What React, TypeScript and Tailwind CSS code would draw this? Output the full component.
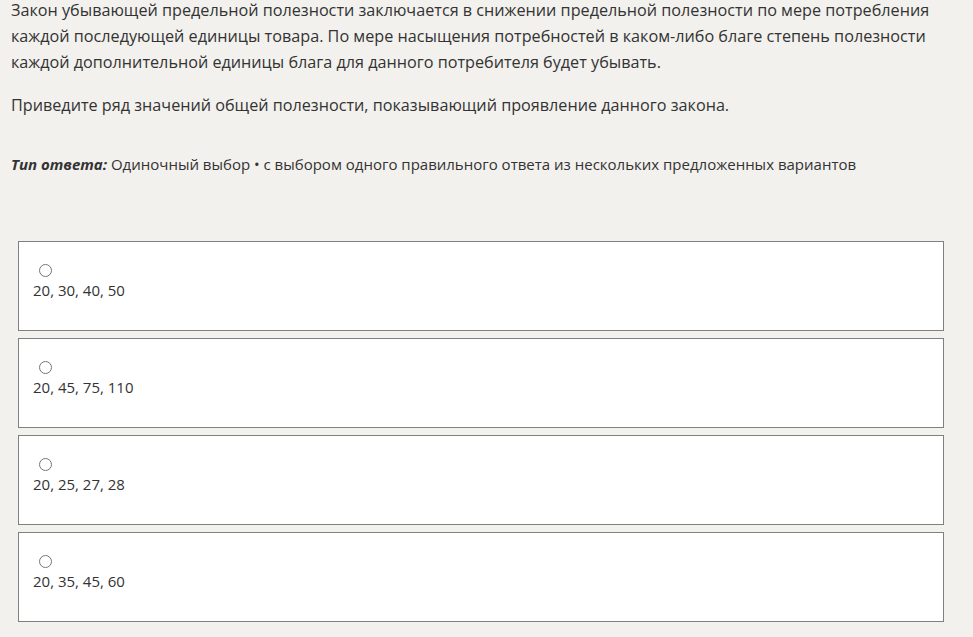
const options = ["20, 30, 40, 50", "20, 45, 75, 110", "20, 25, 27, 28", "20, 35, 45, 60"];

export default function App() {
  return (
    <div className="min-h-[637px] bg-[#f2f1ed] text-[#333333] font-['Open_Sans',sans-serif] pt-px">
      <div className="pl-[11px] pr-[29px]">
        <p className="-mt-[4px] text-[16.2px] leading-[26px]">
          Закон убывающей предельной полезности заключается в снижении предельной полезности по мере потребления
          <br />
          каждой последующей единицы товара. По мере насыщения потребностей в каком-либо благе степень полезности
          <br />
          каждой дополнительной единицы блага для данного потребителя будет убывать.
        </p>
        <p className="mt-[17px] text-[16.2px] leading-[26px]">
          Приведите ряд значений общей полезности, показывающий проявление данного закона.
        </p>
        <p className="mt-[36px] text-[15px] leading-[20px]">
          <span className="font-bold italic">Тип ответа:</span> Одиночный выбор • с выбором одного правильного ответа из нескольких предложенных вариантов
        </p>
      </div>
      <div className="mt-[67px] ml-[18px] mr-[29px] flex flex-col gap-[7px]">
        {options.map((o) => (
          <label key={o} className="block h-[90px] border border-[#808080] bg-white pl-[14px] pt-[22px]">
            <span className="ml-[6px] block h-[13px] w-[13px] rounded-full border border-[#767676] bg-white" />
            <span className="mt-[3px] block text-[15px] leading-[20px]">{o}</span>
          </label>
        ))}
      </div>
    </div>
  );
}
